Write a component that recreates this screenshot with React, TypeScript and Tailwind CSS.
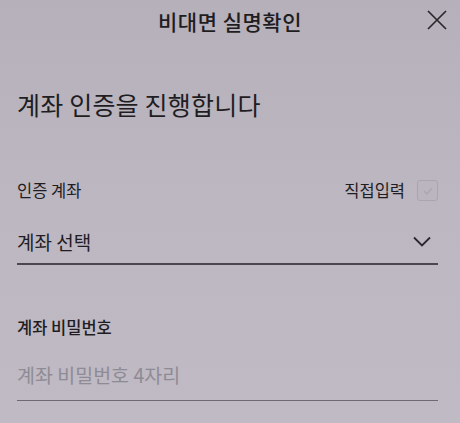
import React from "react";

export default function App() {
  return (
    <div
      className="w-[460px] h-[423px] bg-gradient-to-b from-[#b5b0ba] via-[#bcb7c1] to-[#bfbac4] text-[#1f1d22] overflow-hidden"
      style={{ fontFamily: '"Noto Sans CJK KR", "Noto Sans", sans-serif' }}
    >
      <div className="relative h-[42px] flex items-center justify-center">
        <span className="text-[21px] font-medium tracking-[0.5px] leading-none">비대면 실명확인</span>
        <svg className="absolute right-[13px] top-[10px]" width="20" height="20" viewBox="0 0 20 20" fill="none" stroke="#2a282d" strokeWidth="1.7">
          <path d="M1 1 L19 19 M19 1 L1 19" />
        </svg>
      </div>
      <div className="pl-[17px] pr-[22px]">
        <div className="pt-[50px] text-[25px] leading-none tracking-[0.2px]">계좌 인증을 진행합니다</div>
        <div className="mt-[63px] flex items-center justify-between">
          <span className="text-[16.5px] leading-none">인증 계좌</span>
          <div className="flex items-center gap-[12px]">
            <span className="text-[16.5px] leading-none">직접입력</span>
            <div className="w-[21px] h-[21px] rounded-[3px] border border-[#aaa6ae] bg-[#bab5bf] flex items-center justify-center">
              <svg width="12" height="12" viewBox="0 0 12 12" fill="none" stroke="#aaa6ae" strokeWidth="1.2">
                <path d="M2 6 L5 9 L10 3" />
              </svg>
            </div>
          </div>
        </div>
        <div className="mt-[27px] flex items-center justify-between h-[26px]">
          <span className="text-[19px] leading-none">계좌 선택</span>
          <svg className="mr-[7px]" width="18" height="11" viewBox="0 0 18 11" fill="none" stroke="#2a282d" strokeWidth="1.8">
            <path d="M1 1.5 L9 9.5 L17 1.5" />
          </svg>
        </div>
        <div className="mt-[9px] h-[1.5px] bg-[#4a474e]" />
        <div className="mt-[54px] text-[16.5px] font-medium leading-none">계좌 비밀번호</div>
        <div className="mt-[30px] text-[19.5px] leading-none text-[#8f8b94]">계좌 비밀번호 4자리</div>
        <div className="mt-[15px] h-[1px] bg-[#6d6a72]" />
      </div>
    </div>
  );
}
